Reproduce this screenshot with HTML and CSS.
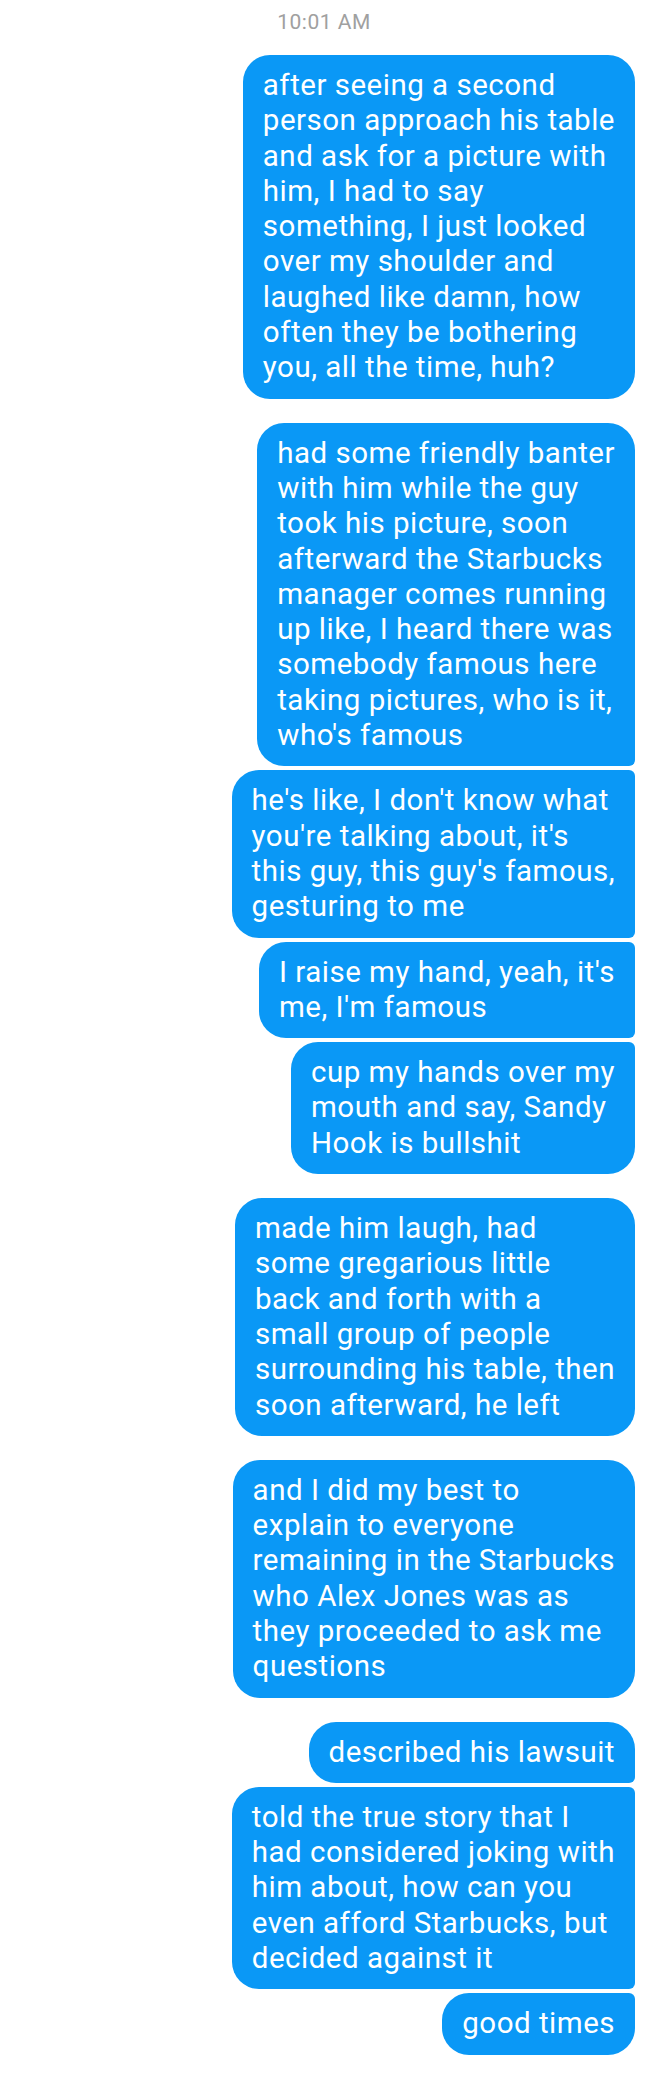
FILE: index.html
```html
<!DOCTYPE html>
<html lang="en">
<head>
<meta charset="utf-8">
<title>Messages</title>
<link rel="stylesheet" href="styles.css">
</head>
<body>
<main class="thread">
  <div class="timestamp">10:01 AM</div>
  <div class="bubble solo">after seeing a second<br>person approach his table<br>and ask for a picture with<br>him, I had to say<br>something, I just looked<br>over my shoulder and<br>laughed like damn, how<br>often they be bothering<br>you, all the time, huh?</div>
  <div class="bubble first gap-lg">had some friendly banter<br>with him while the guy<br>took his picture, soon<br>afterward the Starbucks<br>manager comes running<br>up like, I heard there was<br>somebody famous here<br>taking pictures, who is it,<br>who's famous</div>
  <div class="bubble middle gap-sm">he's like, I don't know what<br>you're talking about, it's<br>this guy, this guy's famous,<br>gesturing to me</div>
  <div class="bubble middle gap-sm">I raise my hand, yeah, it's<br>me, I'm famous</div>
  <div class="bubble last gap-sm">cup my hands over my<br>mouth and say, Sandy<br>Hook is bullshit</div>
  <div class="bubble solo gap-lg">made him laugh, had<br>some gregarious little<br>back and forth with a<br>small group of people<br>surrounding his table, then<br>soon afterward, he left</div>
  <div class="bubble solo gap-lg">and I did my best to<br>explain to everyone<br>remaining in the Starbucks<br>who Alex Jones was as<br>they proceeded to ask me<br>questions</div>
  <div class="bubble first gap-lg">described his lawsuit</div>
  <div class="bubble middle gap-sm">told the true story that I<br>had considered joking with<br>him about, how can you<br>even afford Starbucks, but<br>decided against it</div>
  <div class="bubble last gap-sm">good times</div>
</main>
</body>
</html>
```
FILE: styles.css
```css
html, body {
  margin: 0;
  padding: 0;
  background: #ffffff;
}

.thread {
  display: flex;
  flex-direction: column;
  align-items: flex-end;
  padding: 0 13px 0 0;
  font-family: Roboto, "Liberation Sans", sans-serif;
}

.timestamp {
  align-self: center;
  margin-left: 13px;
  padding-top: 7px;
  height: 55px;
  box-sizing: border-box;
  font-size: 21px;
  letter-spacing: 0.5px;
  line-height: 30px;
  color: #a0a0a0;
}

.bubble {
  box-sizing: border-box;
  padding: 13px 20px;
  background: #0a98f6;
  color: #ffffff;
  font-size: 29.5px;
  letter-spacing: 0.5px;
  line-height: 35.3px;
  white-space: nowrap;
  border-radius: 27px;
}

.gap-lg { margin-top: 24px; }
.gap-sm { margin-top: 4px; }

.first { border-bottom-right-radius: 6px; }
.middle { border-top-right-radius: 6px; border-bottom-right-radius: 6px; }
.last { border-top-right-radius: 6px; }
```
